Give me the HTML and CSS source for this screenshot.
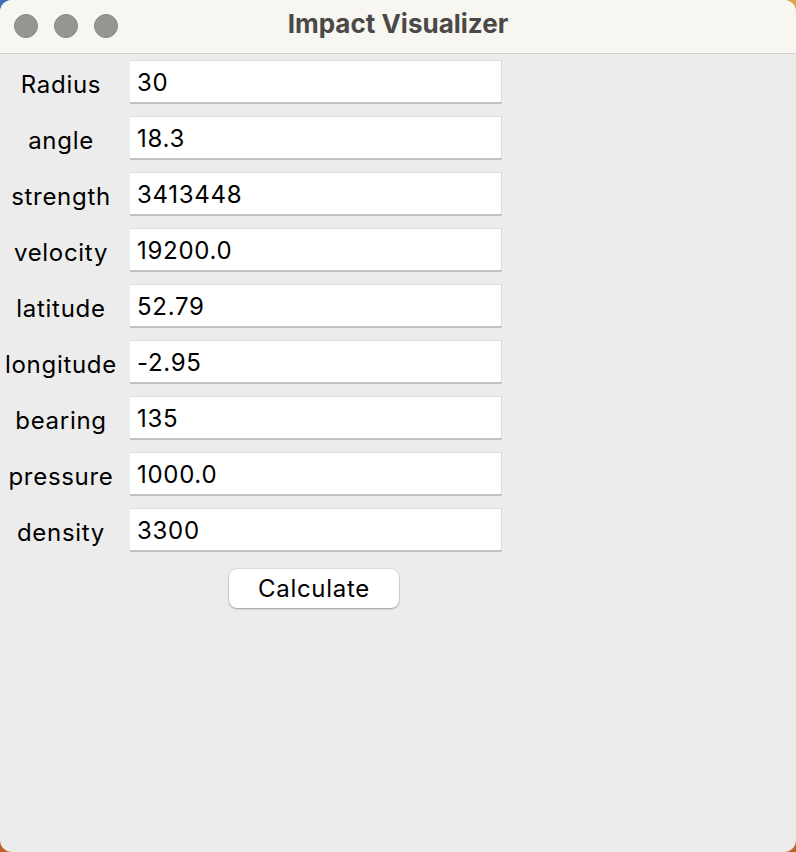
FILE: index.html
```html
<!DOCTYPE html>
<html>
<head>
<meta charset="utf-8">
<title>Impact Visualizer</title>
<link rel="stylesheet" href="styles.css">
</head>
<body>
<div class="window">
  <div class="titlebar">
    <div class="lights">
      <span class="light"></span>
      <span class="light"></span>
      <span class="light"></span>
    </div>
    <div class="title">Impact Visualizer</div>
  </div>
  <div class="content">
    <div class="form">
      <label class="lbl">Radius</label><div class="entry">30</div>
      <label class="lbl">angle</label><div class="entry">18.3</div>
      <label class="lbl">strength</label><div class="entry">3413448</div>
      <label class="lbl">velocity</label><div class="entry">19200.0</div>
      <label class="lbl">latitude</label><div class="entry">52.79</div>
      <label class="lbl">longitude</label><div class="entry">-2.95</div>
      <label class="lbl">bearing</label><div class="entry">135</div>
      <label class="lbl">pressure</label><div class="entry">1000.0</div>
      <label class="lbl">density</label><div class="entry">3300</div>
    </div>
    <div class="actions">
      <button class="btn">Calculate</button>
    </div>
  </div>
</div>
</body>
</html>
```
FILE: styles.css
```css
html, body {
  margin: 0;
  padding: 0;
  height: 100%;
}
body {
  background:
    linear-gradient(to right, #3d6fb5 0%, #8a8f80 50%, #e3a443 100%) top / 100% 50% no-repeat,
    #c0612b;
  font-family: Inter, "Liberation Sans", sans-serif;
}
.window {
  height: 100%;
  background: #ececec;
  border-radius: 12px;
  overflow: hidden;
  display: flex;
  flex-direction: column;
}
.titlebar {
  position: relative;
  height: 54px;
  box-sizing: border-box;
  padding-bottom: 6px;
  flex: none;
  background: #f8f6f1;
  border-bottom: 1px solid #d2d0cc;
  display: flex;
  align-items: center;
  justify-content: center;
}
.lights {
  position: absolute;
  left: 14px;
  top: 14px;
  display: flex;
  gap: 16px;
}
.light {
  width: 24px;
  height: 24px;
  border-radius: 50%;
  background: #979591;
  box-sizing: border-box;
  border: 1px solid #8a8884;
}
.title {
  font-weight: 700;
  font-size: 26px;
  color: #4a4947;
}
.content {
  padding: 6px 0 0 0;
}
.form {
  display: grid;
  grid-template-columns: 122px 372px;
  column-gap: 8px;
  row-gap: 12px;
  align-items: center;
}
.lbl {
  text-align: center;
  font-size: 24px;
  letter-spacing: 0.7px;
  color: #000;
  padding-top: 4px;
}
.entry {
  height: 44px;
  box-sizing: border-box;
  background: #fff;
  border-top: 1px solid #dedede;
  border-bottom: 2px solid #c2c2c2;
  border-right: 1px solid #dcdcdc;
  padding: 1px 7px 0;
  font-size: 24px;
  letter-spacing: 0.7px;
  line-height: 42px;
  color: #000;
}
.actions {
  width: 628px;
  display: flex;
  justify-content: center;
  margin-top: 17px;
}
.btn {
  width: 170px;
  height: 39px;
  background: #fff;
  border: none;
  border-radius: 8px;
  box-shadow: 0 1px 2px rgba(0,0,0,0.3), 0 0 0 0.5px rgba(0,0,0,0.12);
  font-family: Inter, "Liberation Sans", sans-serif;
  font-size: 24px;
  letter-spacing: 0.7px;
  color: #000;
  padding: 0;
}
```
